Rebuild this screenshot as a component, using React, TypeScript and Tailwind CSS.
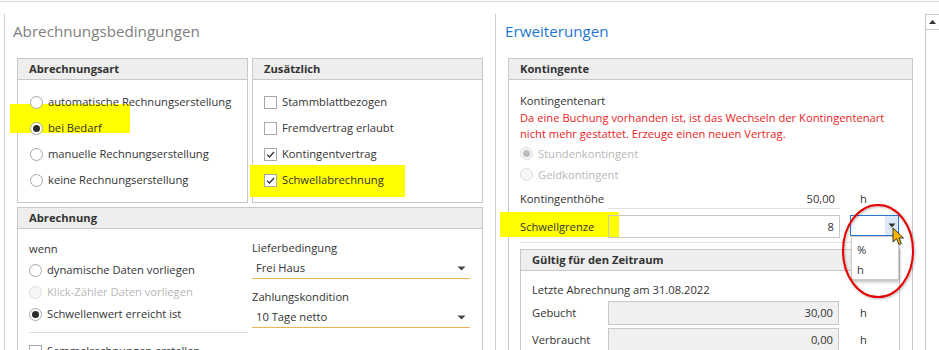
import React from "react";

function Radio({ label, checked, disabled, h }: { label: string; checked?: boolean; disabled?: boolean; h: string }) {
  return (
    <div className={`flex items-center ${h}`}>
      <span
        className={`w-[13px] h-[13px] rounded-full border flex items-center justify-center mr-[5px] shrink-0 ${
          disabled ? "border-[#dcdcdc] bg-[#f7f7f7]" : "border-[#a8a8a8] bg-white"
        }`}
      >
        {checked && <span className={`w-[7px] h-[7px] rounded-full ${disabled ? "bg-[#bdbdbd]" : "bg-[#2b2b2b]"}`} />}
      </span>
      <span className={disabled ? "text-[#b8b8b8]" : "text-[#333333]"}>{label}</span>
    </div>
  );
}

function Check({ label, checked }: { label: string; checked?: boolean }) {
  return (
    <div className="relative flex items-center h-[26px]">
      <span className="w-[13px] h-[13px] border border-[#a8a8a8] bg-white mr-[5px] shrink-0 flex items-center justify-center">
        {checked && (
          <svg width="11" height="11" viewBox="0 0 11 11">
            <path d="M2 5.6 L4.4 8 L9 3" fill="none" stroke="#333" strokeWidth="1.3" />
          </svg>
        )}
      </span>
      <span className="text-[#333333]">{label}</span>
    </div>
  );
}

function Box({ title, className, children }: { title: string; className?: string; children?: React.ReactNode }) {
  return (
    <div className={`border border-[#c8c8c8] bg-white ${className ?? ""}`}>
      <div className="h-[21px] bg-[#eeeeee] border-b border-[#c8c8c8] px-[11px] flex items-center font-bold text-[#333333]">
        {title}
      </div>
      {children}
    </div>
  );
}

function Select({ value }: { value: string }) {
  return (
    <div className="h-[21px] border-b border-[#efb452] flex items-center justify-between pl-[4px] pr-[4px]">
      <span className="text-[#333333]">{value}</span>
      <svg width="9" height="5" viewBox="0 0 9 5">
        <path d="M0.5 0.5 L8.5 0.5 L4.5 4.5 Z" fill="#444" />
      </svg>
    </div>
  );
}

export default function App() {
  return (
    <div className="w-[939px] h-[350px] overflow-hidden bg-white font-['Open_Sans',sans-serif] text-[11.2px] leading-[16px] pt-px">
      <div className="border-t border-[#d6d6d6] h-[349px] pt-[12px] flex">
        {/* Left panel */}
        <div className="ml-[4px] w-[491px] border-l border-[#cfcfcf] pl-[12px] relative">
          <div className="-ml-[4px] mt-[6px] h-[22px] text-[15.2px] leading-[22px] text-[#808080]">Abrechnungsbedingungen</div>
          <div className="mt-[16px] flex gap-[4px]">
            <Box title="Abrechnungsart" className="w-[231px] h-[145px]">
              <div className="pt-[9px] pl-[12px] relative">
                <div className="absolute left-[-8px] top-[24px] w-[120px] h-[29px] bg-[#ffff00]" />
                <div className="relative">
                  <Radio h="h-[26px]" label="automatische Rechnungserstellung" />
                  <Radio h="h-[26px]" label="bei Bedarf" checked />
                  <Radio h="h-[26px]" label="manuelle Rechnungserstellung" />
                  <Radio h="h-[26px]" label="keine Rechnungserstellung" />
                </div>
              </div>
            </Box>
            <Box title="Zusätzlich" className="w-[231px] h-[145px]">
              <div className="pt-[9px] pl-[11px] relative">
                <div className="absolute left-[-3px] top-[85px] w-[155px] h-[32px] bg-[#ffff00]" />
                <div className="relative">
                  <Check label="Stammblattbezogen" />
                  <Check label="Fremdvertrag erlaubt" />
                  <Check label="Kontingentvertrag" checked />
                  <Check label="Schwellabrechnung" checked />
                </div>
              </div>
            </Box>
          </div>
          <Box title="Abrechnung" className="mt-[4px] w-[466px] h-[150px]">
            <div className="grid grid-cols-[219px_218px] gap-x-[4px] pl-[11px]">
              <div className="pt-[10px]">
                <div className="h-[20px] flex items-center text-[#333333]">wenn</div>
                <Radio h="h-[22px]" label="dynamische Daten vorliegen" />
                <Radio h="h-[22px]" label="Klick-Zähler Daten vorliegen" disabled />
                <Radio h="h-[22px]" label="Schwellenwert erreicht ist" checked />
                <div className="mt-[7px] border-t border-[#dcdcdc]" />
                <div className="mt-[8px] h-[20px] flex items-center">
                  <span className="w-[13px] h-[13px] border border-[#a8a8a8] bg-white mr-[5px]" />
                  <span className="text-[#333333]">Sammelrechnungen erstellen</span>
                </div>
              </div>
              <div className="pt-[9px]">
                <div className="h-[20px] flex items-center text-[#333333]">Lieferbedingung</div>
                <Select value="Frei Haus" />
                <div className="mt-[8px] h-[20px] flex items-center text-[#333333]">Zahlungskondition</div>
                <Select value="10 Tage netto" />
              </div>
            </div>
          </Box>
        </div>

        {/* Right panel */}
        <div className="w-[430px] border-l border-[#cfcfcf] pl-[12px] relative">
          <div className="-ml-[3px] mt-[6px] h-[22px] text-[15.2px] leading-[22px] text-[#1e78d0]">Erweiterungen</div>
          <Box title="Kontingente" className="mt-[16px] w-[405px] h-[300px]">
            <div className="pl-[11px] pr-[12px] pt-[11px]">
              <div className="h-[19px] flex items-center text-[#333333]">Kontingentenart</div>
              <div className="text-[#ee1c25] leading-[16px]">
                Da eine Buchung vorhanden ist, ist das Wechseln der Kontingentenart nicht mehr gestattet. Erzeuge einen neuen Vertrag.
              </div>
              <div className="mt-px">
                <Radio h="h-[21px]" label="Stundenkontingent" checked disabled />
                <Radio h="h-[21px]" label="Geldkontingent" disabled />
              </div>
              <div className="mt-[4px] flex h-[20px]">
                <div className="w-[88px] flex items-center text-[#333333]">Kontingenthöhe</div>
                <div className="w-[232px] border-b border-[#e2e2e2] flex items-center justify-end pr-[5px] text-[#333333]">50,00</div>
                <div className="ml-[10px] w-[49px] pl-[10px] flex items-center text-[#333333]">h</div>
              </div>
              <div className="mt-[6px] flex h-[23px] relative">
                <div className="absolute left-[-20px] top-[-3px] w-[119px] h-[25px] bg-[#ffff00]" />
                <div className="relative w-[88px] flex items-center text-[#333333]">Schwellgrenze</div>
                <div className="relative w-[232px] border border-[#c8c8c8] flex items-center justify-end pr-[5px] text-[#333333]">8</div>
                <div className="relative ml-[10px] w-[49px] h-[21px] border border-[#2a78d4] bg-white flex justify-end">
                  <div className="w-[13px] h-full bg-[#dce9f7] flex items-center justify-center">
                    <svg width="8" height="5" viewBox="0 0 8 5">
                      <path d="M0.5 0.5 L7.5 0.5 L4 4.5 Z" fill="#333" />
                    </svg>
                  </div>
                  <div className="absolute left-0 top-[20px] w-[48px] h-[44px] bg-white border border-[#cccccc] shadow-[1px_2px_3px_rgba(0,0,0,0.25)] pt-[3px] pl-[5px] z-10">
                    <div className="h-[20px] flex items-center text-[#333333]">%</div>
                    <div className="h-[20px] flex items-center text-[#333333]">h</div>
                  </div>
                </div>
              </div>
              <div className="mt-[4px] border-t border-[#e2e2e2]" />
              <Box title="Gültig für den Zeitraum" className="mt-[6px] w-[380px] h-[120px]">
                <div className="pl-[11px] pt-[9px]">
                  <div className="h-[20px] flex items-center text-[#333333]">Letzte Abrechnung am 31.08.2022</div>
                  <div className="mt-[1px] flex h-[24px]">
                    <div className="w-[76px] flex items-center text-[#333333]">Gebucht</div>
                    <div className="w-[231px] border border-[#c8c8c8] bg-[#f0f0f0] flex items-center justify-end pr-[5px] text-[#333333]">30,00</div>
                    <div className="pl-[21px] flex items-center text-[#333333]">h</div>
                  </div>
                  <div className="mt-[3px] flex h-[24px]">
                    <div className="w-[76px] flex items-center text-[#333333]">Verbraucht</div>
                    <div className="w-[231px] border border-[#c8c8c8] bg-[#f0f0f0] flex items-center justify-end pr-[5px] text-[#333333]">0,00</div>
                    <div className="pl-[21px] flex items-center text-[#333333]">h</div>
                  </div>
                </div>
              </Box>
            </div>
          </Box>
        </div>

        {/* Scrollbar */}
        <div className="w-[14px] border-l border-t border-[#c8c8c8]">
          <div className="h-[15px] border-b border-[#c8c8c8] flex items-center justify-center">
            <svg width="7" height="4" viewBox="0 0 7 4">
              <path d="M0 4 L7 4 L3.5 0 Z" fill="#333" />
            </svg>
          </div>
        </div>
      </div>

      {/* Annotation: red ellipse */}
      <svg className="absolute left-[840px] top-[202px] pointer-events-none z-20" width="76" height="98" viewBox="0 0 76 98">
        <defs>
          <filter id="sh" x="-20%" y="-20%" width="140%" height="140%">
            <feDropShadow dx="1" dy="1" stdDeviation="1" floodColor="#000" floodOpacity="0.3" />
          </filter>
        </defs>
        <ellipse cx="38" cy="49" rx="35" ry="46" fill="none" stroke="#e60000" strokeWidth="2" filter="url(#sh)" />
      </svg>
      {/* Cursor */}
      <svg className="absolute left-[892px] top-[227px] z-30" width="14" height="20" viewBox="0 0 14 20">
        <path d="M1 1 L1 15 L4.5 11.8 L7 17.5 L9.3 16.5 L6.9 11 L11.5 11 Z" fill="#f7b500" stroke="#222" strokeWidth="0.9" strokeLinejoin="round" />
      </svg>
    </div>
  );
}
